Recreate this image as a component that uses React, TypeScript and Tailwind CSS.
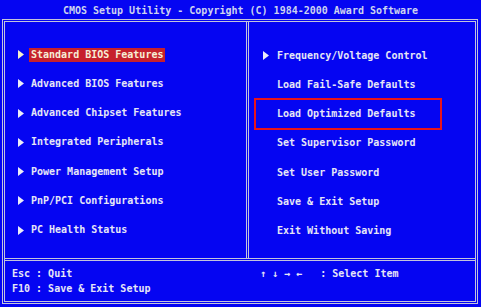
import React from "react";

const leftItems = [
  "Standard BIOS Features",
  "Advanced BIOS Features",
  "Advanced Chipset Features",
  "Integrated Peripherals",
  "Power Management Setup",
  "PnP/PCI Configurations",
  "PC Health Status",
];

const rightItems = [
  "Frequency/Voltage Control",
  "Load Fail-Safe Defaults",
  "Load Optimized Defaults",
  "Set Supervisor Password",
  "Set User Password",
  "Save & Exit Setup",
  "Exit Without Saving",
];

function Tri({ color }: { color: string }) {
  return (
    <svg width="6" height="9" viewBox="0 0 6 9" className="shrink-0">
      <polygon points="0,0 6,4.5 0,9" fill={color} />
    </svg>
  );
}

export default function App() {
  return (
    <div className="w-[481px] h-[307px] bg-[#0505f2] overflow-hidden font-['DejaVu_Sans_Mono',monospace] font-bold text-[10px] text-[#e6e6f6]">
      <div className="h-[19px] pt-[2px] flex items-center justify-center text-[#cdd3ef] whitespace-pre">
        CMOS Setup Utility - Copyright (C) 1984-2000 Award Software
      </div>
      <div className="ml-[2px] w-[476px] h-[285px] border-[3px] border-double border-[#c4c4dc] flex flex-col">
        <div className="h-[239px] flex border-b-[3px] border-double border-[#c4c4dc]">
          <div className="w-[244px] h-full border-r-[3px] border-double border-[#c4c4dc] pt-[18px]">
            {leftItems.map((t, i) => (
              <div key={t} className="h-[29.25px] flex items-center pl-[13px] gap-[5px]">
                <Tri color={i === 0 ? "#f6eecb" : "#ececf8"} />
                <span
                  className={
                    i === 0
                      ? "h-[14px] leading-[14px] px-[2px] bg-[#c6202c] text-[#f6eed6] whitespace-pre"
                      : "h-[14px] leading-[14px] px-[2px] whitespace-pre"
                  }
                >
                  {t}
                </span>
              </div>
            ))}
          </div>
          <div className="flex-1 pt-[19px]">
            {rightItems.map((t, i) => (
              <div key={t} className="relative h-[29.25px] flex items-center pl-[14px] gap-[6px]">
                {i === 0 ? <Tri color="#ececf8" /> : <span className="w-[6px] shrink-0" />}
                <span className="h-[14px] leading-[14px] px-[2px] whitespace-pre">{t}</span>
                {i === 2 && (
                  <div className="absolute left-[5px] top-[-2px] w-[188px] h-[32px] border-2 border-[#e8141c]" />
                )}
              </div>
            ))}
          </div>
        </div>
        <div className="flex-1 flex pt-[5px] leading-[15px]">
          <div className="w-[244px] pl-[7px]">
            <div className="whitespace-pre">Esc : Quit</div>
            <div className="whitespace-pre">F10 : Save &amp; Exit Setup</div>
          </div>
          <div className="pl-[11px]">
            <div className="whitespace-pre">↑ ↓ → ←   : Select Item</div>
          </div>
        </div>
      </div>
    </div>
  );
}
